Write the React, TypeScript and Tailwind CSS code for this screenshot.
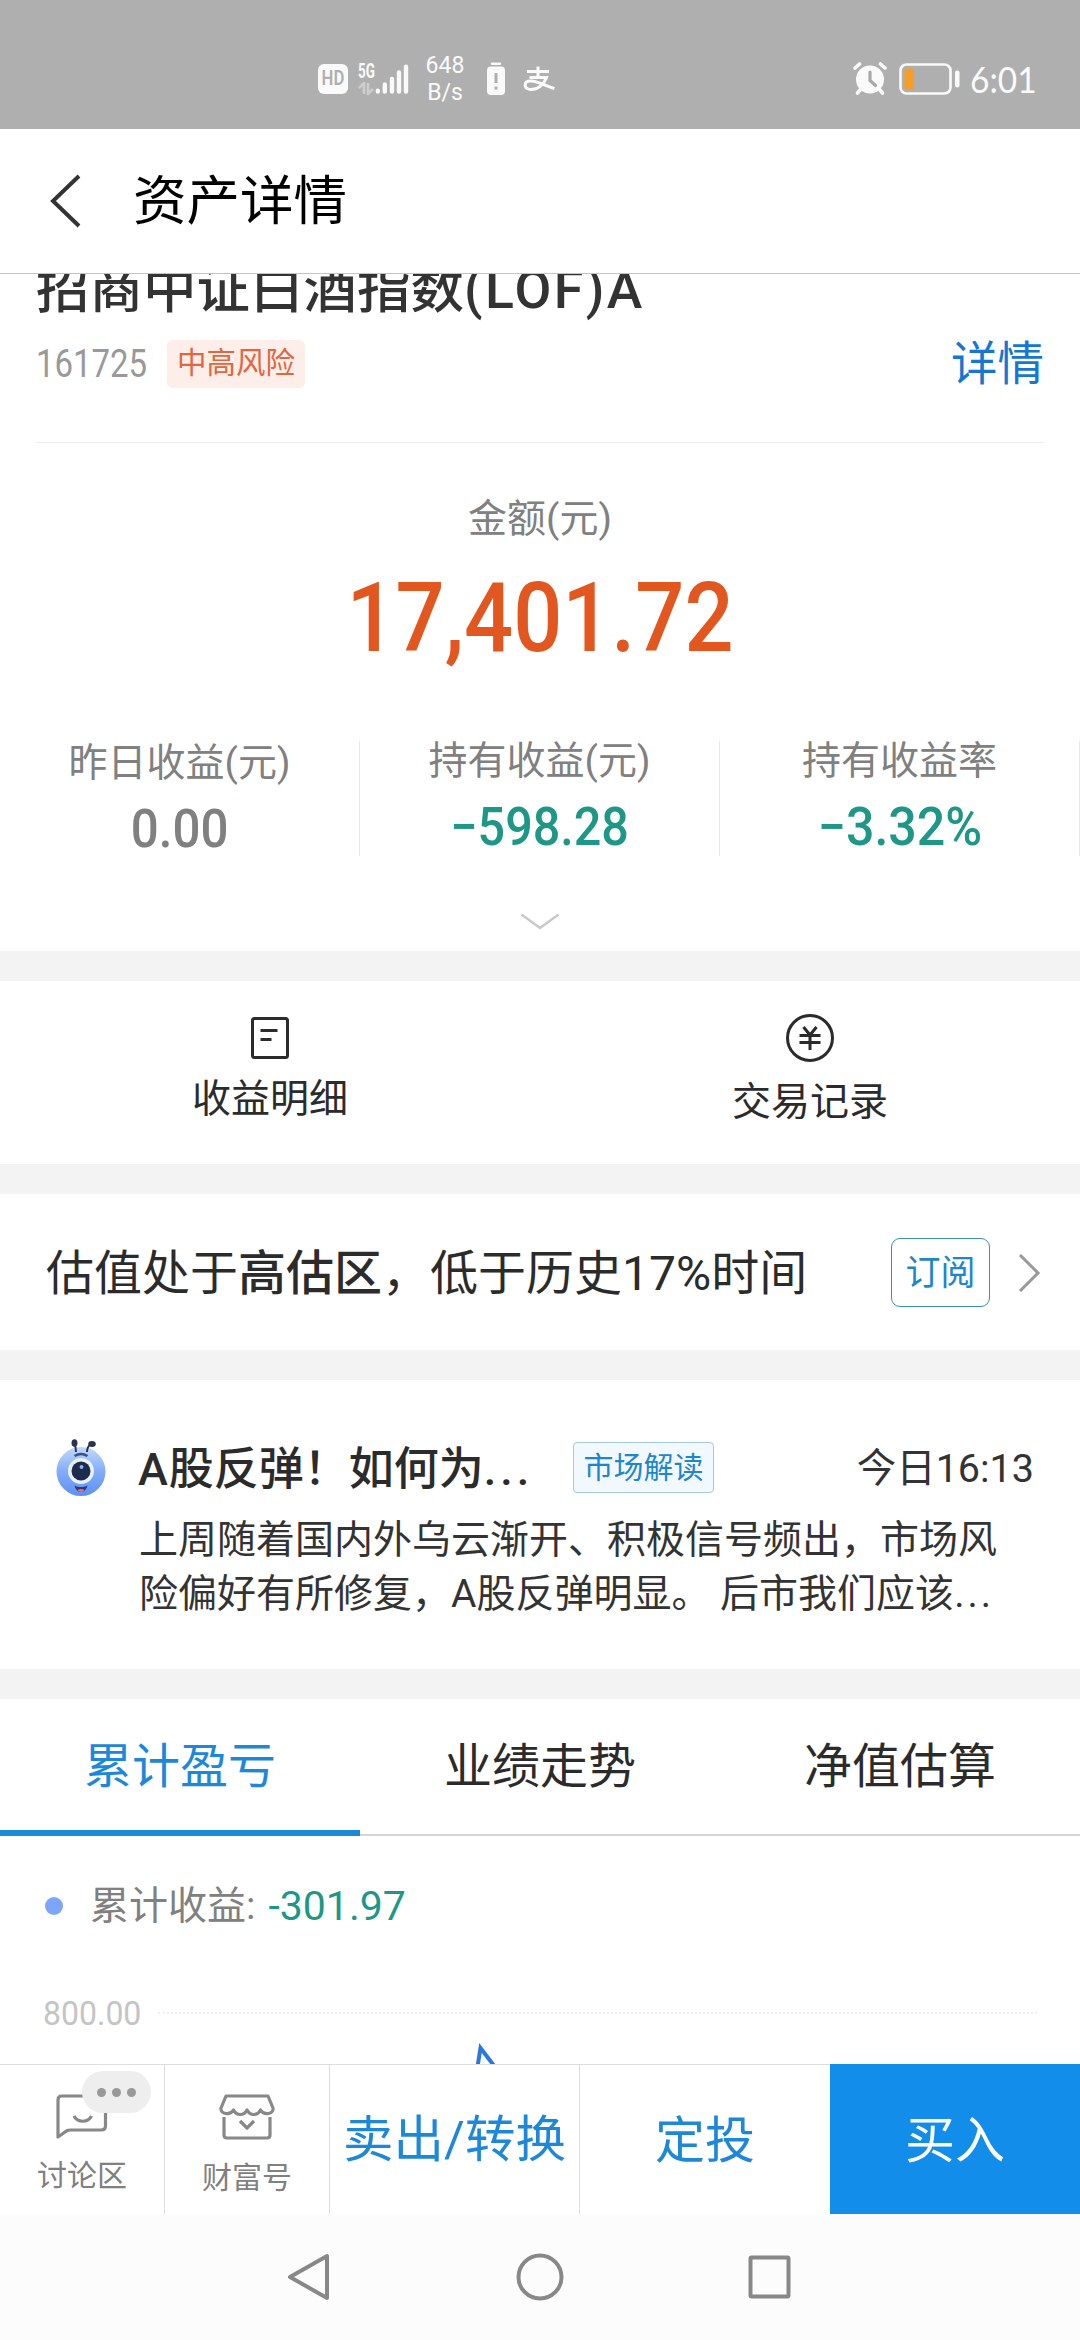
import type { ReactNode } from 'react';

type Stat = { label: string; value: string; tone: string; offset: string; scale: string };

const STATS: readonly Stat[] = [
  { label: '昨日收益(元)', value: '0.00', tone: 'text-[#808080]', offset: 'pt-[3px]', scale: 'scale-x-[0.93]' },
  { label: '持有收益(元)', value: '−598.28', tone: 'text-[#1f9786]', offset: 'pt-px', scale: 'scale-x-[0.915]' },
  { label: '持有收益率', value: '−3.32%', tone: 'text-[#1f9786]', offset: 'pt-px', scale: 'scale-x-[0.945]' },
];

const TABS = ['累计盈亏', '业绩走势', '净值估算'] as const;

function StatusBar() {
  return (
    <div className="flex h-[129px] shrink-0 items-center bg-[#afafaf] pt-7 text-[#fafafa]">
      <div className="ml-[318px] flex size-[30px] items-center justify-center rounded-md bg-[#fafafa] text-[19px] leading-none font-semibold text-[#afafaf]">
        <span className="scale-x-[0.88] scale-y-[1.05]">HD</span>
      </div>
      <div className="ml-[10px] flex h-8 w-4 flex-col justify-between">
        <span className="origin-left scale-x-[0.64] text-[21px] leading-[16px] font-bold">5G</span>
        <svg viewBox="0 0 16 13" className="h-[13px] w-4 fill-none stroke-[#cdcdcd] stroke-[2.6]">
          <path d="M1 6 6 1v11M10 1v11l5-5" />
        </svg>
      </div>
      <svg viewBox="0 0 34 32" className="ml-px h-8 w-[34px] fill-none stroke-[#fafafa] stroke-[4.4] [stroke-linecap:round]">
        <path d="M2.8 27.6v1M9.8 21.5v7.1M17 16v12.6M24 9.5v19.1M31 3.8v24.8" />
      </svg>
      <div className="ml-[13px] flex w-[46px] flex-col items-center text-[23px] leading-[27px]">
        <span>648</span>
        <span>B/s</span>
      </div>
      <svg viewBox="0 0 20 34" className="ml-[18px] h-[34px] w-5">
        <path d="M6 1.8h8" className="fill-none stroke-[#fafafa] stroke-[2.4] [stroke-linecap:round]" />
        <rect x="1" y="4.5" width="18" height="28.5" rx="4" className="fill-[#fafafa]" />
        <path d="M10 11v10M10 24.5v3" className="fill-none stroke-[#afafaf] stroke-[3]" />
      </svg>
      {/* Alipay mark */}
      <svg viewBox="0 0 34 28" className="ml-[16px] h-7 w-[34px] fill-none stroke-[#fafafa] stroke-[3]">
        <path d="M5 6.5h22M16 1.5v11M7.5 12.5h17c-2.5 7-9 12.500-16 12-7-.8-7.5-8.5.5-8.5 7 0 14.5 5 23.5 7.5" />
      </svg>

      <svg viewBox="0 0 34 34" className="ml-[297px] h-[34px] w-[34px] fill-none stroke-[#fafafa] [stroke-linecap:round]">
        <circle cx="17" cy="17.5" r="14" className="fill-[#fafafa] stroke-none" />
        <path d="m2 6 4.5-4M32 6l-4.5-4" strokeWidth="3.6" />
        <path d="m7 28-2.5 3M27 28l2.5 3" strokeWidth="3.6" />
        <path d="M17 10v8.5l5.5 5" className="stroke-[#a8a8a8]" strokeWidth="3.2" />
      </svg>
      <svg viewBox="0 0 62 32" className="ml-[12px] h-8 w-[62px]">
        <rect x="1.5" y="1.5" width="50" height="29" rx="6" className="fill-none stroke-[#fafafa] stroke-[2.6]" />
        <rect x="5.5" y="5.5" width="9.5" height="21" rx="2.5" className="fill-[#f79e27]" />
        <rect x="56" y="7.5" width="4.5" height="17" rx="2" className="fill-[#fafafa]" />
      </svg>
      <span className="ml-[9px] origin-left scale-x-[0.93] font-[Lato] text-[36px] leading-none">6:01</span>
    </div>
  );
}

function Header() {
  return (
    <header className="flex h-[145px] shrink-0 items-center border-b border-[#c4c4c4] bg-white">
      <svg viewBox="0 0 32 54" className="ml-[49px] h-[54px] w-8 fill-none stroke-[#333] stroke-[4]">
        <path d="M30 2 4 27l26 25" />
      </svg>
      <h1 className="ml-[52px] pt-[2px] text-[53.5px] leading-none font-normal text-black">资产详情</h1>
    </header>
  );
}

function Gap() {
  return <div className="h-[30px] shrink-0 bg-[#f3f3f3]" />;
}

function Summary() {
  return (
    <section className="h-[677px] shrink-0 bg-white">
      <div className="mx-9 flex h-[169px] flex-col border-b border-[#eee]">
        <h2 className="-mt-[11px] text-[53.5px] leading-[54px] font-medium text-[#333]">
          招商中证白酒指数<span className="tracking-[2.4px]">(LOF)A</span>
        </h2>
        <div className="mt-[22px] flex h-[50px] items-center">
          <span className="w-[110px] origin-left scale-x-[0.845] pt-px text-[39px] leading-none font-[450] text-[#999]">
            161725
          </span>
          <span className="ml-[21px] flex h-12 w-[138px] items-center justify-center rounded-md bg-[#fdeee9] text-[29.5px] leading-none text-[#e0673f]">
            中高风险
          </span>
          <a className="ml-auto text-[46.5px] leading-none text-[#1677d2]">详情</a>
        </div>
      </div>
      <div className="mt-[57px] text-center text-[39px] leading-[39px] text-[#808080]">金额(元)</div>
      <div className="mt-[31px] flex justify-center">
        <span className="scale-x-[0.9] text-[96px] leading-[96px] font-medium text-[#e2561f]">17,401.72</span>
      </div>
      <div className="mt-[75px] grid h-[112px] grid-cols-3">
        {STATS.map(({ label, value, tone, offset, scale }) => (
          <div key={label} className={`flex flex-col items-center border-r border-[#e8e8e8] ${offset}`}>
            <span className="text-[39px] leading-[39px] whitespace-nowrap text-[#808080]">{label}</span>
            <span className={`mt-[20px] text-[53px] leading-[53px] font-medium ${tone} ${scale}`}>{value}</span>
          </div>
        ))}
      </div>
      <svg viewBox="0 0 40 18" className="mx-auto mt-[60px] h-[18px] w-10 fill-none stroke-[#c8c8c8] stroke-[2.5]">
        <path d="m1.5 1.5 18.5 13.5 18.5-13.5" />
      </svg>
    </section>
  );
}

function Shortcut({ label, offset, children }: { label: string; offset: string; children: ReactNode }) {
  return (
    <div className="flex flex-col items-center">
      <svg viewBox="0 0 50 50" className="mt-8 size-[50px] fill-none stroke-[#2b2b2b] stroke-[3]">
        {children}
      </svg>
      <span className={`text-[39px] leading-[39px] text-[#2b2b2b] ${offset}`}>{label}</span>
    </div>
  );
}

function Shortcuts() {
  return (
    <section className="grid h-[183px] shrink-0 grid-cols-2 bg-white">
      <Shortcut label="收益明细" offset="mt-[17px]">
        <rect x="7.5" y="5.5" width="35" height="39" rx="2" />
        <path d="M15.5 17.5h17M15.5 26.5h11" />
      </Shortcut>
      <Shortcut label="交易记录" offset="mt-[20px]">
        <circle cx="25" cy="25" r="22.5" />
        <path d="m18.5 14 6.5 8 6.5-8M14.5 22.5h21M14.5 29.5h21M25 22v15" />
      </Shortcut>
    </section>
  );
}

function Valuation() {
  return (
    <section className="flex h-[156px] shrink-0 items-center bg-white pr-[38px] pl-[46px]">
      <p className="pt-[3px] text-[48px] leading-none text-[#2b2b2b]">
        估值处于<b className="font-medium">高估区</b>，低于历史17%时间
      </p>
      <button className="ml-auto flex h-[69px] w-[99px] items-center justify-center rounded-[9px] border-[1.5px] border-[#3c8fae] pt-[2px] text-[35px] leading-none text-[#1e86cc]">
        订阅
      </button>
      <svg viewBox="0 0 24 40" className="mt-[2px] ml-[28px] h-10 w-6 fill-none stroke-[#999] stroke-[3]">
        <path d="m2 2 18 18L2 38" />
      </svg>
    </section>
  );
}

function Mascot() {
  return (
    <svg viewBox="0 0 50 58" className="h-[58px] w-[50px]">
      <defs>
        <linearGradient id="mascot" x1="0" y1="0" x2="0" y2="1">
          <stop offset="0" stopColor="#c3d8fb" />
          <stop offset="0.5" stopColor="#82adf8" />
          <stop offset="1" stopColor="#5d90f5" />
        </linearGradient>
      </defs>
      <circle cx="25" cy="32.5" r="24.5" fill="url(#mascot)" />
      <path d="M20 13c0-4-.5-6-2-9M31 13c0-4 1-6 4-8" fill="none" stroke="#2c3350" strokeWidth="2" />
      <ellipse cx="18.5" cy="4" rx="3" ry="3.8" fill="#2c3350" />
      <ellipse cx="36" cy="5" rx="3.8" ry="3" fill="#2c3350" />
      <path d="M18.5 17c4-2.500 9-2.500 13 0" fill="none" stroke="#34508f" strokeWidth="2.6" />
      <circle cx="25" cy="32" r="13" fill="#e9f1ff" />
      <circle cx="25" cy="32" r="9.5" fill="#1d2c4c" />
      <circle cx="25.5" cy="28" r="2" fill="#8fb0e8" />
      <path d="M18.5 46.5c4 2 9 2 13 0-1 4-3.5 6.5-6.5 6.5s-5.5-2.5-6.5-6.5Z" fill="#33396b" />
      <path d="M21.5 51c2-1.5 5-1.5 7 0-2 2.5-5 2.5-7 0Z" fill="#e8707c" />
    </svg>
  );
}

function News() {
  return (
    <section className="h-[289px] shrink-0 bg-white pr-[46px] pl-[56px]">
      <div className="mt-[56px] flex h-[63px] items-center">
        <Mascot />
        <h3 className="ml-[32px] w-[392px] pt-[3px] text-[45px] leading-none font-medium whitespace-nowrap text-[#2b2b2b]">
          <span className="tracking-[1px]">A</span>股反弹！如何为<span className="tracking-[4px]">...</span>
        </h3>
        <span className="ml-[43px] flex h-[51px] w-[141px] items-center justify-center rounded-[4px] border border-[#a5c9d9] bg-[#f2f9fe] text-[30px] leading-none text-[#1e86cc]">
          市场解读
        </span>
        <span className="ml-auto pt-[2px] text-[39.5px] leading-none text-[#333]">今日16:13</span>
      </div>
      <p className="mt-[14px] ml-[83px] text-[39px] leading-[54px] whitespace-nowrap text-[#333]">
        上周随着国内外乌云渐开、积极信号频出，市场风
        <br />
        险偏好有所修复，A股反弹明显。 后市我们应该<span className="tracking-[3px]">...</span>
      </p>
    </section>
  );
}

function Profit() {
  return (
    <section className="h-[365px] shrink-0 bg-white">
      <nav className="grid h-[137px] grid-cols-3 border-b-2 border-[#d6d6d6]">
        {TABS.map((tab, i) => (
          <a
            key={tab}
            className={
              i === 0
                ? '-mb-[2px] border-b-[6px] border-[#1e88d8] pt-[44px] text-center text-[48px] leading-[48px] text-[#1e88d8]'
                : 'pt-[44px] text-center text-[48px] leading-[48px] text-[#2b2b2b]'
            }
          >
            {tab}
          </a>
        ))}
      </nav>
      <div className="mt-[49px] flex h-[42px] items-center pl-[45px]">
        <i className="size-[18px] rounded-full bg-[#7ba6fb]" />
        <span className="ml-[27px] text-[39px] leading-none text-[#808080]">累计收益:</span>
        <span className="ml-[13px] text-[41px] leading-none text-[#1f9786]">-301.97</span>
      </div>
      <div className="mt-[68px] flex h-[36px] items-center pl-[43px]">
        <span className="w-[115px] origin-left scale-x-[0.955] pt-[2px] text-[33.5px] leading-none text-[#c4c4c4]">
          800.00
        </span>
        <div className="w-[879px] border-t-2 border-dotted border-[#f0f0f0]" />
      </div>
      {/* Only the tip of the profit curve shows above the action bar */}
      <svg viewBox="0 0 1080 34" className="h-[34px] w-full fill-none stroke-[#2b76e0] stroke-[4]">
        <path d="m477.5 36 3-19L495 36" />
      </svg>
    </section>
  );
}

function ActionBar() {
  return (
    <footer className="flex h-[150px] shrink-0 border-t border-[#ddd] bg-white">
      <div className="relative flex w-[165px] flex-col items-center border-r border-[#ddd]">
        <svg viewBox="0 0 52 46" className="mt-[29px] h-[46px] w-[52px] fill-none stroke-[#888] stroke-[3.2] [stroke-linejoin:round]">
          <path d="M5.5 2h40q4 0 4 4v26q0 4-4 4H14q-3 0-5 2l-7 5V6q0-4 3.5-4Z" />
          <path d="M18 22c3.5 7 14 7 17.5 0" />
        </svg>
        <span className="mt-[21px] text-[30px] leading-[30px] text-[#808080]">讨论区</span>
        <div className="absolute top-[6px] left-[82px] flex h-[42px] w-[69px] items-center justify-center gap-[6px] rounded-full bg-[#eee]">
          <i className="size-[9px] rounded-full bg-[#999]" />
          <i className="size-[9px] rounded-full bg-[#999]" />
          <i className="size-[9px] rounded-full bg-[#999]" />
        </div>
      </div>
      <div className="flex w-[165px] flex-col items-center border-r border-[#ddd]">
        <svg viewBox="0 0 56 48" className="mt-[29px] h-12 w-14 fill-none stroke-[#888] stroke-[3.2] [stroke-linejoin:round]">
          <path d="M7 2h42l5 12c1 6-9 8-12.5 2-3 6-10.5 6-13.5 0-3 6-10.5 6-13.5 0C11 22 1 20 2 14Z" />
          <path d="M5 23v18q0 3 3 3h40q3 0 3-3V23M21 27l7 7 7-7" />
        </svg>
        <span className="mt-[21px] text-[30px] leading-[30px] text-[#808080]">财富号</span>
      </div>
      <button className="w-[250px] border-r border-[#ddd] pt-[2px] text-[50.5px] leading-none text-[#1e88d8]">卖出/转换</button>
      <button className="w-[250px] pt-[2px] text-[50px] leading-none text-[#1e88d8]">定投</button>
      <button className="-mt-px w-[250px] bg-[#128de9] pt-[3px] text-[50px] leading-none text-white">买入</button>
    </footer>
  );
}

function SystemNav() {
  return (
    <div className="flex h-[126px] shrink-0 items-center bg-[#fcfcfc] pl-[286px]">
      <svg viewBox="0 0 506 50" className="h-[50px] w-[506px] fill-none stroke-[#888] stroke-[4] [stroke-linejoin:round]">
        <path d="M41 4v42L4 25Z" />
        <circle cx="254" cy="25" r="21.5" />
        <rect x="464.5" y="5.5" width="38" height="39" rx="1" />
      </svg>
    </div>
  );
}

export default function App() {
  return (
    <div
      lang="zh-CN"
      className="flex h-[2340px] w-[1080px] flex-col overflow-hidden bg-white font-[Roboto,'Noto_Sans_CJK_SC',sans-serif]"
    >
      <StatusBar />
      <Header />
      <main className="flex h-[1790px] shrink-0 flex-col overflow-hidden">
        <Summary />
        <Gap />
        <Shortcuts />
        <Gap />
        <Valuation />
        <Gap />
        <News />
        <Gap />
        <Profit />
      </main>
      <ActionBar />
      <SystemNav />
    </div>
  );
}
